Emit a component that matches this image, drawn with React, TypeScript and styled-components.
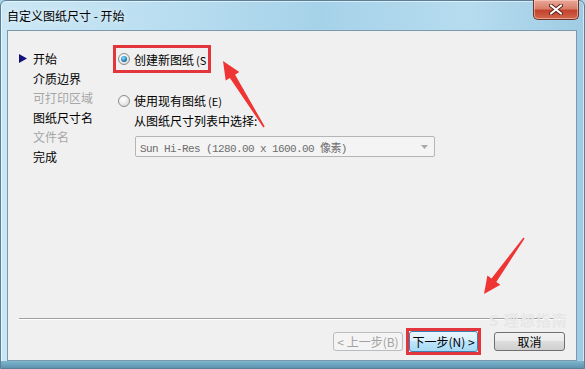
import styled, { createGlobalStyle } from "styled-components";

const GlobalStyle = createGlobalStyle`
  html, body {
    margin: 0;
    padding: 0;
  }
  body {
    width: 585px;
    height: 369px;
    overflow: hidden;
    background: #a9d3e8;
    font-family: "Noto Sans CJK SC", "Noto Sans", sans-serif;
  }
`;

const Window = styled.div`
  position: relative;
  width: 585px;
  height: 369px;
  box-sizing: border-box;
  display: flex;
  flex-direction: column;
  border: 1px solid #5b7f96;
  border-radius: 6px 6px 0 0;
  background: linear-gradient(90deg, #cbe7f5 0%, #b8ddf0 30%, #a6d2e9 55%, #b6dcef 80%, #9fcce4 100%);
  box-shadow: inset 0 0 0 1px rgba(255, 255, 255, 0.55);
`;

const TitleBar = styled.div`
  height: 29px;
  display: flex;
  justify-content: space-between;
  padding-left: 6px;
`;

const Title = styled.div`
  font-size: 12px;
  line-height: 29px;
  color: #000;
  text-shadow: 0 0 6px rgba(255, 255, 255, 0.9);
`;

const CloseButton = styled.div`
  width: 46px;
  height: 20px;
  margin-right: 5px;
  margin-top: -1px;
  box-sizing: border-box;
  display: flex;
  align-items: center;
  justify-content: center;
  border: 1px solid #6e3329;
  border-top: none;
  border-radius: 0 0 5px 5px;
  background: linear-gradient(180deg, #e9a898 0%, #d9806c 45%, #c4432d 55%, #d2674c 100%);
  box-shadow: inset 0 0 0 1px rgba(255, 220, 210, 0.5);
`;

const Frame = styled.div`
  flex: 1;
  display: flex;
  padding: 0 7px 7px 6px;
  background: linear-gradient(180deg, transparent 0, transparent calc(100% - 7px), #7fb6cf calc(100% - 7px), #5d93ae 100%);
`;

const Content = styled.div`
  flex: 1;
  display: flex;
  flex-direction: column;
  background: #f0f0f0;
  border: 1px solid #7b99ad;
`;

const Main = styled.div`
  flex: 1;
  display: flex;
  padding: 14px 0 0 11px;
`;

const Nav = styled.div`
  width: 94px;
  padding-top: 4px;
  display: flex;
  flex-direction: column;
`;

const NavItem = styled.div<{ $disabled?: boolean }>`
  display: flex;
  align-items: center;
  height: 19.5px;
  font-size: 12px;
  color: ${(p) => (p.$disabled ? "#a7a7a7" : "#000")};
`;

const NavMarker = styled.span`
  width: 14px;
  display: flex;
  align-items: center;
`;

const Options = styled.div`
  display: flex;
  flex-direction: column;
`;

const Highlight = styled.div<{ $w?: number; $h: number }>`
  width: ${(p) => (p.$w ? `${p.$w}px` : "auto")};
  align-self: flex-start;
  height: ${(p) => p.$h}px;
  box-sizing: border-box;
  border: 3px solid #e3363c;
  display: flex;
  align-items: center;
  padding-right: ${(p) => (p.$w ? 0 : 2)}px;
`;

const RadioRow = styled.label<{ $indent: number }>`
  display: flex;
  align-items: center;
  gap: 4px;
  height: 19.5px;
  padding-left: ${(p) => p.$indent}px;
  font-size: 12px;
  color: #000;
  white-space: nowrap;
`;

const Mnemonic = styled.span`
  font-size: 11px;
  margin-left: 2px;
`;

const Radio = styled.span<{ $checked?: boolean }>`
  width: 12px;
  height: 12px;
  box-sizing: border-box;
  border-radius: 50%;
  border: 1px solid #8c8c8c;
  background: radial-gradient(circle at 40% 35%, #ffffff 0%, #f0f0f0 40%, #cfcfcf 100%);
  display: flex;
  align-items: center;
  justify-content: center;
  flex-shrink: 0;

  &::after {
    content: "";
    display: ${(p) => (p.$checked ? "block" : "none")};
    width: 6px;
    height: 6px;
    border-radius: 50%;
    background: radial-gradient(circle at 40% 35%, #8fe3ff 0%, #2b8fc4 50%, #163f63 100%);
  }
`;

const Second = styled.div`
  margin-top: 18px;
`;

const SubText = styled.div`
  padding-left: 21px;
  height: 19.5px;
  display: flex;
  align-items: center;
  font-size: 12px;
  color: #000;
`;

const Select = styled.div`
  margin: 6px 0 0 22px;
  width: 300px;
  height: 21px;
  box-sizing: border-box;
  border: 1px solid #b5b5b5;
  border-radius: 2px;
  background: #f4f4f4;
  display: flex;
  align-items: center;
  justify-content: space-between;
  padding: 0 6px 0 4px;
`;

const SelectText = styled.span`
  font-family: "Liberation Mono", "Noto Sans CJK SC", monospace;
  font-size: 11px;
  letter-spacing: -0.6px;
  color: #6d6d6d;
  white-space: pre;
`;

const Separator = styled.div`
  margin: 0 11px;
  border-top: 1px solid #a0a0a0;
  border-bottom: 1px solid #ffffff;
`;

const ButtonRow = styled.div`
  height: 40px;
  box-sizing: border-box;
  padding: 3px 11px 0 0;
  display: flex;
  justify-content: flex-end;
  align-items: center;
`;

const Button = styled.div<{ $variant?: "disabled" | "hot" | "normal" }>`
  width: ${(p) => (p.$variant === "hot" ? "100%" : "70px")};
  height: ${(p) => (p.$variant === "hot" ? "100%" : "19px")};
  box-sizing: border-box;
  display: flex;
  align-items: center;
  justify-content: center;
  font-size: 12px;
  white-space: nowrap;
  border-radius: 3px;
  border: 1px solid
    ${(p) => (p.$variant === "disabled" ? "#b9bdc0" : p.$variant === "hot" ? "#3c7fb1" : "#707070")};
  color: ${(p) => (p.$variant === "disabled" ? "#a2a2a2" : "#000")};
  background: ${(p) =>
    p.$variant === "disabled"
      ? "#f4f4f4"
      : p.$variant === "hot"
      ? "linear-gradient(180deg, #eaf6fd 0%, #d9f0fc 45%, #bee6fd 50%, #a7d9f5 100%)"
      : "linear-gradient(180deg, #f2f2f2 0%, #ebebeb 45%, #dddddd 50%, #cfcfcf 100%)"};
`;

const Overlay = styled.svg`
  position: absolute;
  left: 0;
  top: 0;
  pointer-events: none;
`;

const Watermark = styled.div`
  position: absolute;
  left: 488px;
  top: 308px;
  font-size: 15px;
  font-weight: bold;
  color: #e7e7e7;
  letter-spacing: 1px;
`;

const navItems = [
  { label: "开始", current: true },
  { label: "介质边界" },
  { label: "可打印区域", disabled: true },
  { label: "图纸尺寸名" },
  { label: "文件名", disabled: true },
  { label: "完成" },
];

export default function App() {
  return (
    <>
      <GlobalStyle />
      <Window>
        <TitleBar>
          <Title>自定义图纸尺寸 - 开始</Title>
          <CloseButton>
            <svg width="14" height="11" viewBox="0 0 14 11">
              <path d="M2 1.5 L12 9.5 M12 1.5 L2 9.5" stroke="#5b2118" strokeWidth="4" strokeLinecap="round" />
              <path d="M2 1.5 L12 9.5 M12 1.5 L2 9.5" stroke="#ffffff" strokeWidth="2.2" strokeLinecap="round" />
            </svg>
          </CloseButton>
        </TitleBar>
        <Frame>
          <Content>
            <Main>
              <Nav>
                {navItems.map((n) => (
                  <NavItem key={n.label} $disabled={n.disabled}>
                    <NavMarker>
                      {n.current && (
                        <svg width="8" height="9" viewBox="0 0 8 9">
                          <path d="M0 0 L8 4.5 L0 9 Z" fill="#12127a" />
                        </svg>
                      )}
                    </NavMarker>
                    {n.label}
                  </NavItem>
                ))}
              </Nav>
              <Options>
                <Highlight $h={28}>
                  <RadioRow $indent={2}>
                    <Radio $checked />
                    <span>
                      创建新图纸<Mnemonic>(S</Mnemonic>
                    </span>
                  </RadioRow>
                </Highlight>
                <Second>
                  <RadioRow $indent={5}>
                    <Radio />
                    <span>
                      使用现有图纸<Mnemonic>(E)</Mnemonic>
                    </span>
                  </RadioRow>
                  <SubText>从图纸尺寸列表中选择:</SubText>
                  <Select>
                    <SelectText>Sun Hi-Res (1280.00 x 1600.00 像素)</SelectText>
                    <svg width="7" height="4" viewBox="0 0 7 4">
                      <path d="M0 0 L7 0 L3.5 4 Z" fill="#a8a8a8" />
                    </svg>
                  </Select>
                </Second>
              </Options>
            </Main>
            <Separator />
            <ButtonRow>
              <Button $variant="disabled">&lt; 上一步(B)</Button>
              <Highlight $w={75} $h={27} style={{ marginLeft: 3, alignSelf: "center" }}>
                <Button $variant="hot">下一步(N) &gt;</Button>
              </Highlight>
              <Button $variant="normal" style={{ marginLeft: 13, width: 71 }}>
                取消
              </Button>
            </ButtonRow>
          </Content>
        </Frame>
        <Watermark>S 理想指南</Watermark>
        <Overlay width="585" height="369" viewBox="0 0 585 369">
          <polygon
            points="222,60 238.3,71.1 234.1,73.7 263.7,125.6 262.3,126.4 228.9,76.9 224.7,79.5"
            fill="#ef3434"
          />
          <polygon
            points="483,293 486.4,274.6 490.5,277.5 522.4,236.5 523.6,237.5 495.3,280.9 499.4,283.8"
            fill="#ef3434"
          />
        </Overlay>
      </Window>
    </>
  );
}
